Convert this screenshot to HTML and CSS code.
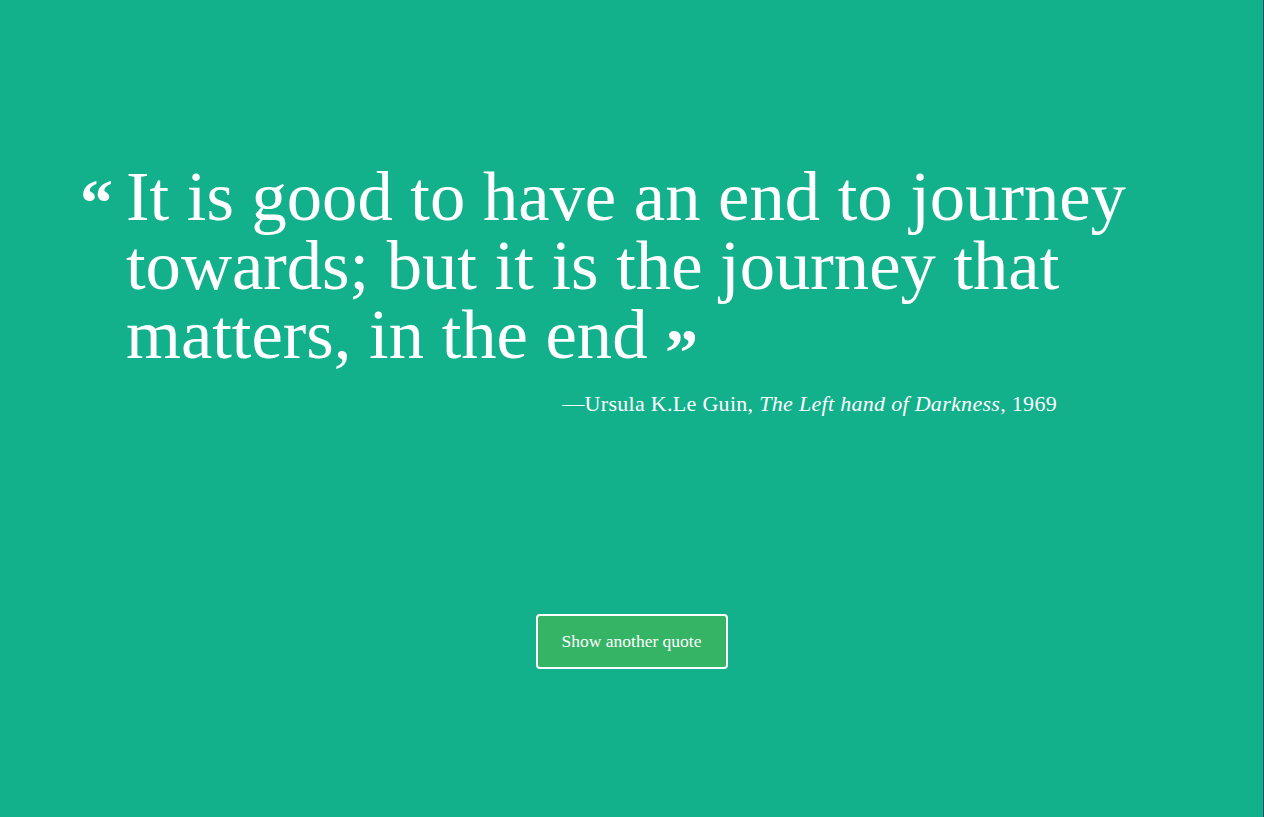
FILE: index.html
```html
<!DOCTYPE html>
<html lang="en">
<head>
<meta charset="utf-8">
<title>Random Quote</title>
<link rel="stylesheet" href="styles.css">
</head>
<body>
<main class="page">
  <section class="quote-box">
    <blockquote class="quote">
      <span class="mark mark-open">&ldquo;</span>
      <p class="quote-text">It is good to have an end to journey towards; but it is the journey that matters, in the end <span class="mark mark-close">&rdquo;</span></p>
    </blockquote>
    <p class="author">&mdash;Ursula K.Le Guin, <em>The Left hand of Darkness</em>, 1969</p>
  </section>
  <div class="actions">
    <button class="btn" type="button">Show another quote</button>
  </div>
</main>
</body>
</html>
```

FILE: styles.css
```css
html, body {
  margin: 0;
  padding: 0;
  height: 100%;
}
body {
  background: #13b08c;
  color: #ffffff;
  font-family: "Liberation Serif", "Times New Roman", serif;
  border-right: 1px solid #1d4f5c;
  box-sizing: border-box;
}
.page {
  display: flex;
  flex-direction: column;
  padding: 162px 80px 0 80px;
}
.quote-box {
  display: flex;
  flex-direction: column;
}
.quote {
  margin: 0;
  display: flex;
  align-items: flex-start;
}
.mark {
  font-weight: bold;
  line-height: 1;
}
.mark-open {
  font-size: 66px;
  width: 46px;
  flex: none;
  margin-top: 8px;
}
.mark-close {
  font-size: 66px;
  display: inline-block;
  vertical-align: -16px;
  line-height: 0;
}
.quote-text {
  margin: 0;
  font-size: 70.6px;
  line-height: 69px;
  max-width: 1060px;
}
.author {
  margin: 22px 0 0 0;
  font-size: 22px;
  letter-spacing: 0.3px;
  align-self: flex-end;
  margin-right: 126px;
}
.author em {
  font-style: italic;
}
.actions {
  display: flex;
  justify-content: center;
  margin-top: 197px;
}
.btn {
  background: #36b466;
  color: #ffffff;
  border: 2px solid #ffffff;
  border-radius: 4px;
  font-family: "Liberation Serif", "Times New Roman", serif;
  font-size: 17.5px;
  width: 192px;
  height: 55px;
  padding: 0;
  cursor: pointer;
}
```
